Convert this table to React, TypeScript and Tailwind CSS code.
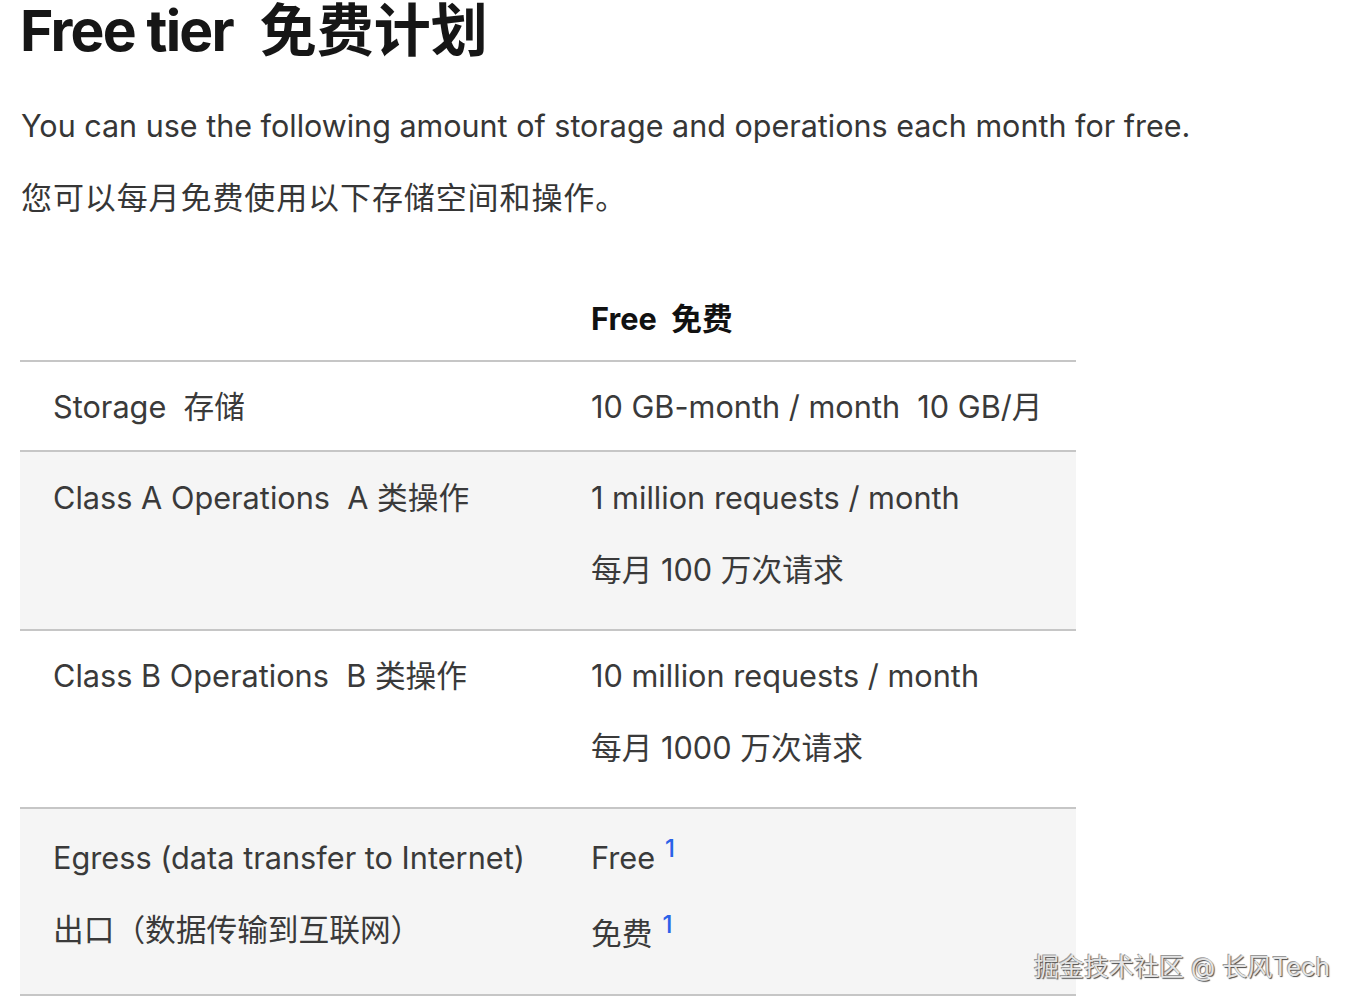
import React from "react";

const font = { fontFamily: '"Inter", "Noto Sans CJK SC", sans-serif' };

function Sup() {
  return <sup className="text-[24px] font-medium text-[#2a62e8] ml-[10px] relative top-[-12px]">1</sup>;
}

export default function App() {
  return (
    <div className="relative w-[1354px] h-[1008px] overflow-hidden bg-white" style={font}>
      <div className="pl-[20px]">
        <h1 className="text-[57px] leading-[58px] font-bold text-[#161616] mt-[2px] whitespace-pre">
          <span className="tracking-[-1.8px]">Free tier</span>  免费计划
        </h1>
        <p className="text-[30.5px] leading-[45px] text-[#363636] mt-[43px] ml-[1px]">
          You can use the following amount of storage and operations each month for free.
        </p>
        <p className="text-[31px] leading-[45px] tracking-[0.9px] text-[#363636] mt-[27px] ml-[1px]">您可以每月免费使用以下存储空间和操作。</p>

        <div className="w-[1056px] mt-[76px] text-[30.7px] leading-[45px] text-[#3a3a3a]">
          <div className="grid grid-cols-[571px_1fr] pb-[19px] border-b-2 border-[#c6c6c6]">
            <div></div>
            <div className="font-bold text-[#111] whitespace-pre">Free  免费</div>
          </div>
          <div className="grid grid-cols-[571px_1fr] pt-[22px] pb-[21px] border-b-2 border-[#c6c6c6]">
            <div className="pl-[33px] whitespace-pre">Storage  存储</div>
            <div className="whitespace-pre">10 GB-month / month  10 GB/月</div>
          </div>
          <div className="grid grid-cols-[571px_1fr] pt-[23px] pb-[37px] bg-[#f5f5f5] border-b-2 border-[#c6c6c6]">
            <div className="pl-[33px] whitespace-pre">Class A Operations  A 类操作</div>
            <div className="flex flex-col gap-[27px]">
              <div>1 million requests / month</div>
              <div>每月 100 万次请求</div>
            </div>
          </div>
          <div className="grid grid-cols-[571px_1fr] pt-[22px] pb-[37px] border-b-2 border-[#c6c6c6]">
            <div className="pl-[33px] whitespace-pre">Class B Operations  B 类操作</div>
            <div className="flex flex-col gap-[27px]">
              <div>10 million requests / month</div>
              <div>每月 1000 万次请求</div>
            </div>
          </div>
          <div className="grid grid-cols-[571px_1fr] pt-[26px] pb-[38px] bg-[#f5f5f5] border-b-2 border-[#c6c6c6]">
            <div className="pl-[33px] flex flex-col gap-[27px]">
              <div>Egress (data transfer to Internet)</div>
              <div>出口（数据传输到互联网）</div>
            </div>
            <div className="flex flex-col gap-[27px]">
              <div>Free<Sup /></div>
              <div className="mt-[4px]">免费<Sup /></div>
            </div>
          </div>
        </div>
      </div>
      <div
        className="absolute left-[1034px] top-[951px] text-[25px] leading-[32px] text-[#e4e4e4] whitespace-pre"
        style={{ textShadow: "1px 1px 1px #4a4a4a, -1px -1px 0 #9a9a9a" }}
      >
        掘金技术社区 @ 长风Tech
      </div>
    </div>
  );
}
